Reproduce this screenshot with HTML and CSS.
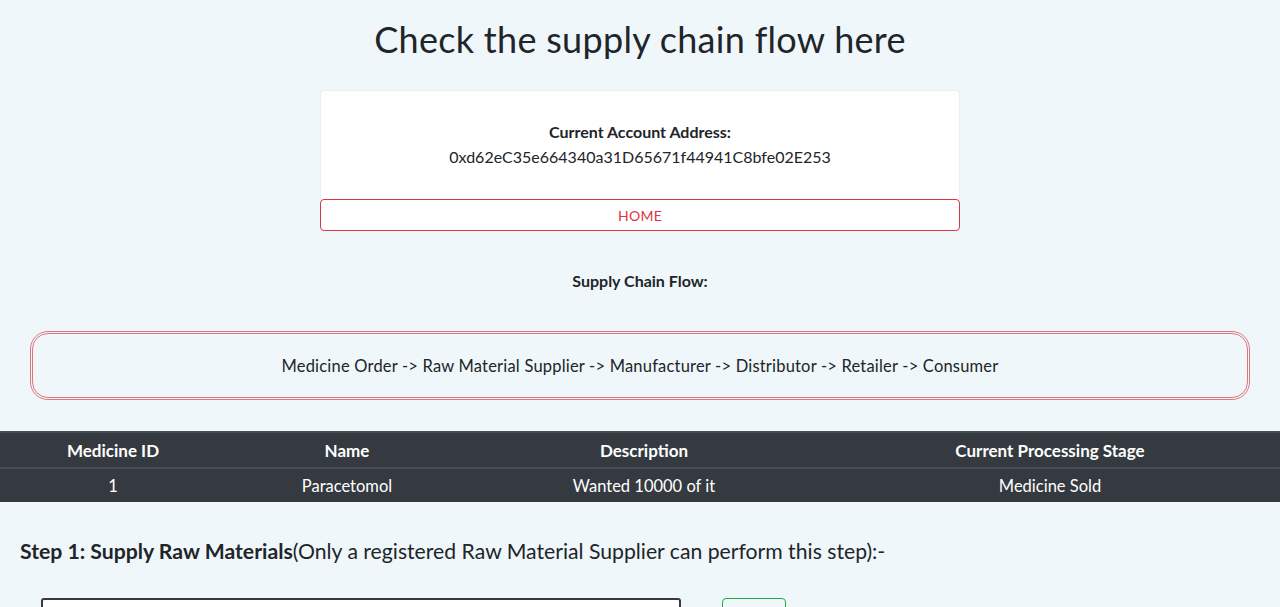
FILE: index.html
```html
<!DOCTYPE html>
<html>
<head>
<meta charset="utf-8">
<link rel="stylesheet" href="styles.css">
</head>
<body>
<div class="page">
  <h1 class="title">Check the supply chain flow here</h1>
  <div class="account">
    <div class="account-card">
      <div class="account-label">Current Account Address:</div>
      <div class="account-addr">0xd62eC35e664340a31D65671f44941C8bfe02E253</div>
    </div>
    <button class="btn-home">HOME</button>
  </div>
  <div class="flow-label">Supply Chain Flow:</div>
  <div class="flow-box">Medicine Order -&gt; Raw Material Supplier -&gt; Manufacturer -&gt; Distributor -&gt; Retailer -&gt; Consumer</div>
  <table class="med-table">
    <thead>
      <tr>
        <th class="c1">Medicine ID</th>
        <th class="c2">Name</th>
        <th class="c3">Description</th>
        <th class="c4">Current Processing Stage</th>
      </tr>
    </thead>
    <tbody>
      <tr>
        <td>1</td>
        <td>Paracetomol</td>
        <td>Wanted 10000 of it</td>
        <td>Medicine Sold</td>
      </tr>
    </tbody>
  </table>
  <h5 class="step"><b>Step 1: Supply Raw Materials</b>(Only a registered Raw Material Supplier can perform this step):-</h5>
  <form class="step-form">
    <input class="step-input" type="text" placeholder="Enter Medicine ID">
    <button type="button" class="btn-supply">Supply</button>
  </form>
</div>
</body>
</html>
```

FILE: styles.css
```css
html, body {
  margin: 0;
  padding: 0;
  background: #eff7fa;
}
body {
  font-family: "Lato", "Open Sans", sans-serif;
  color: #212529;
  font-size: 16px;
}
.page {
  display: flex;
  flex-direction: column;
  align-items: center;
}
.title {
  font-size: 36px;
  font-weight: 400;
  margin: 16px 0 0 0;
  height: 74px;
  line-height: 46px;
  letter-spacing: 0.3px;
}
.account {
  width: 640px;
  display: flex;
  flex-direction: column;
}
.account-card {
  background: #fff;
  border: 1px solid #e9eef0;
  border-bottom: none;
  border-radius: 4px 4px 0 0;
  height: 109px;
  display: flex;
  flex-direction: column;
  align-items: center;
  justify-content: center;
  box-sizing: border-box;
}
.account-label {
  font-weight: 700;
  font-size: 16px;
  line-height: 24px;
}
.account-addr {
  font-size: 16px;
  line-height: 26px;
}
.btn-home {
  height: 32px;
  background: #fff;
  border: 1px solid #dc3545;
  border-radius: 4px;
  color: #dc3545;
  font-family: inherit;
  font-size: 14px;
  letter-spacing: 0.3px;
}
.flow-label {
  margin-top: 38px;
  font-weight: 700;
  font-size: 16px;
  line-height: 24px;
}
.flow-box {
  margin-top: 38px;
  width: 1220px;
  height: 69px;
  box-sizing: border-box;
  border: 3px double #e0737d;
  border-radius: 18px;
  display: flex;
  align-items: center;
  justify-content: center;
  font-size: 16.5px;
  letter-spacing: 0.2px;
}
.med-table {
  margin-top: 31px;
  width: 100%;
  border-collapse: collapse;
  background: #343a40;
  color: #fff;
}
.med-table th, .med-table td {
  text-align: center;
  border-top: 2px solid #454d55;
  padding: 0;
}
.med-table th {
  height: 34px;
  font-weight: 700;
  font-size: 17px;
}
.med-table td {
  height: 33px;
  font-size: 16.5px;
}
.c1 { width: 226px; }
.c2 { width: 242px; }
.c3 { width: 352px; }
.c4 { width: auto; }
.step {
  align-self: stretch;
  margin: 36px 0 0 20px;
  font-size: 21.2px;
  font-weight: 400;
  line-height: 26px;
}
.step b { font-weight: 700; }
.step-form {
  align-self: stretch;
  margin: 34px 0 0 41px;
  display: flex;
  gap: 41px;
}
.step-input {
  width: 640px;
  height: 38px;
  box-sizing: border-box;
  border: 2px solid #343a40;
  border-radius: 3px;
  text-align: center;
  font-family: inherit;
  font-size: 16px;
}
.btn-supply {
  height: 38px;
  width: 64px;
  background: transparent;
  border: 1px solid #28a745;
  border-radius: 4px;
  color: #28a745;
  font-family: inherit;
  font-size: 14px;
}
```
